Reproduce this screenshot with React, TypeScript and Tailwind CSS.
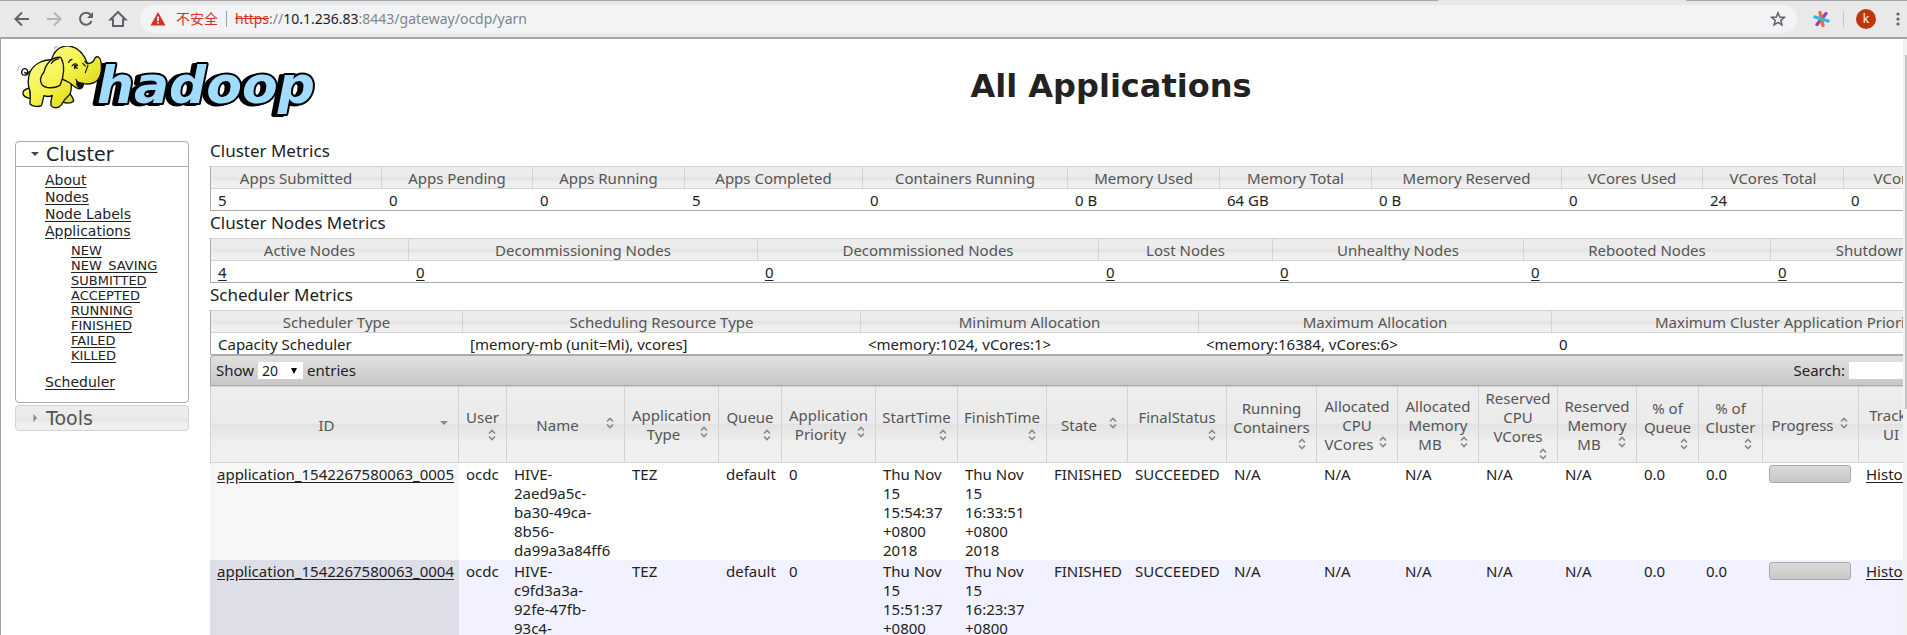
import React, { type ReactNode } from "react";

const metricTables: { title: string; links?: boolean; cols: [string, string, string][] }[] = [
  {
    title: "Cluster Metrics",
    cols: [
      ["Apps Submitted", "5", "w-[171px]"],
      ["Apps Pending", "0", "w-[151px]"],
      ["Apps Running", "0", "w-[152px]"],
      ["Apps Completed", "5", "w-[178px]"],
      ["Containers Running", "0", "w-[205px]"],
      ["Memory Used", "0 B", "w-[152px]"],
      ["Memory Total", "64 GB", "w-[152px]"],
      ["Memory Reserved", "0 B", "w-[190px]"],
      ["VCores Used", "0", "w-[141px]"],
      ["VCores Total", "24", "w-[141px]"],
      ["VCores Reserved", "0", "w-[178px]"],
    ],
  },
  {
    title: "Cluster Nodes Metrics",
    links: true,
    cols: [
      ["Active Nodes", "4", "w-[198px]"],
      ["Decommissioning Nodes", "0", "w-[349px]"],
      ["Decommissioned Nodes", "0", "w-[341px]"],
      ["Lost Nodes", "0", "w-[174px]"],
      ["Unhealthy Nodes", "0", "w-[251px]"],
      ["Rebooted Nodes", "0", "w-[247px]"],
      ["Shutdown Nodes", "0", "w-[251px]"],
    ],
  },
  {
    title: "Scheduler Metrics",
    cols: [
      ["Scheduler Type", "Capacity Scheduler", "w-[252px]"],
      ["Scheduling Resource Type", "[memory-mb (unit=Mi), vcores]", "w-[398px]"],
      ["Minimum Allocation", "<memory:1024, vCores:1>", "w-[338px]"],
      ["Maximum Allocation", "<memory:16384, vCores:6>", "w-[353px]"],
      ["Maximum Cluster Application Priority", "0", "w-[470px]"],
    ],
  },
];

type Sort = "inline" | "below" | "desc" | "none";
const appCols: { label: string[]; width: string; sort: Sort }[] = [
  { label: ["ID"], width: "w-[249px]", sort: "desc" },
  { label: ["User"], width: "w-[48px]", sort: "below" },
  { label: ["Name"], width: "w-[118px]", sort: "inline" },
  { label: ["Application", "Type"], width: "w-[94px]", sort: "inline" },
  { label: ["Queue"], width: "w-[63px]", sort: "below" },
  { label: ["Application", "Priority"], width: "w-[94px]", sort: "inline" },
  { label: ["StartTime"], width: "w-[82px]", sort: "below" },
  { label: ["FinishTime"], width: "w-[89px]", sort: "below" },
  { label: ["State"], width: "w-[81px]", sort: "inline" },
  { label: ["FinalStatus"], width: "w-[99px]", sort: "below" },
  { label: ["Running", "Containers"], width: "w-[90px]", sort: "below" },
  { label: ["Allocated", "CPU", "VCores"], width: "w-[81px]", sort: "inline" },
  { label: ["Allocated", "Memory", "MB"], width: "w-[81px]", sort: "inline" },
  { label: ["Reserved", "CPU", "VCores"], width: "w-[79px]", sort: "below" },
  { label: ["Reserved", "Memory", "MB"], width: "w-[79px]", sort: "inline" },
  { label: ["% of", "Queue"], width: "w-[62px]", sort: "below" },
  { label: ["% of", "Cluster"], width: "w-[64px]", sort: "below" },
  { label: ["Progress"], width: "w-[96px]", sort: "inline" },
  { label: ["Tracking", "UI"], width: "w-[81px]", sort: "inline" },
  { label: ["Blacklisted", "Nodes"], width: "w-[82px]", sort: "none" },
];

const apps = [
  {
    id: "application_1542267580063_0005",
    name: ["HIVE-", "2aed9a5c-", "ba30-49ca-", "8b56-", "da99a3a84ff6"],
    start: ["Thu Nov", "15", "15:54:37", "+0800", "2018"],
    finish: ["Thu Nov", "15", "16:33:51", "+0800", "2018"],
  },
  {
    id: "application_1542267580063_0004",
    name: ["HIVE-", "c9fd3a3a-", "92fe-47fb-", "93c4-"],
    start: ["Thu Nov", "15", "15:51:37", "+0800", "2018"],
    finish: ["Thu Nov", "15", "16:23:37", "+0800", "2018"],
  },
];

const states = ["NEW", "NEW_SAVING", "SUBMITTED", "ACCEPTED", "RUNNING", "FINISHED", "FAILED", "KILLED"];

const headFill =
  "bg-[linear-gradient(to_bottom,#ededed_0%,#ebebeb_48%,#e3e3e3_50%,#efefef_75%,#f0f0f0_100%)]";

function Lines({ items }: { items: string[] }) {
  return (
    <>
      {items.map((t, i) => (
        <span key={i} className="block whitespace-nowrap">
          {t}
        </span>
      ))}
    </>
  );
}

function SortArrows() {
  return (
    <svg width="8" height="12" viewBox="0 0 8 12" fill="none" stroke="#888" strokeWidth="1.6" aria-hidden="true">
      <path d="M1 4.5 4 1.5 7 4.5M1 7.5l3 3 3-3" />
    </svg>
  );
}

function BrowserBar() {
  return (
    <header className="bg-[#e9e9e9] border-b-2 border-[#a4a4a4]">
      <div className="flex h-px" aria-hidden="true">
        <div className="w-[1438px] bg-[#a6a6a6]" />
        <div className="w-[248px]" />
        <div className="flex-1 bg-[#a6a6a6]" />
      </div>
      <div className="flex h-9 items-center pl-3">
        <nav className="flex w-32 gap-3 text-[#5f6368]">
          <button aria-label="Back">
            <svg width="20" height="20" viewBox="0 0 20 20" fill="none" stroke="currentColor" strokeWidth="2">
              <path d="M17 10H4M10 3.5 3.5 10l6.5 6.5" />
            </svg>
          </button>
          <button aria-label="Forward" className="text-[#b4b4b4]">
            <svg width="20" height="20" viewBox="0 0 20 20" fill="none" stroke="currentColor" strokeWidth="2">
              <path d="M3 10h13M10 3.5 16.5 10 10 16.5" />
            </svg>
          </button>
          <button aria-label="Reload">
            <svg width="20" height="20" viewBox="0 0 20 20" fill="none" stroke="currentColor" strokeWidth="2">
              <path d="M15.6 12A6 6 0 1 1 14.5 5.7L16 7.5" />
              <path d="M17 3v6h-6z" fill="currentColor" stroke="none" />
            </svg>
          </button>
          <button aria-label="Home">
            <svg width="20" height="20" viewBox="0 0 20 20" fill="none" stroke="currentColor" strokeWidth="2">
              <path d="M2.5 10.5 10 3l7.5 7.5h-2.5V17H5v-6.5z" />
            </svg>
          </button>
        </nav>
        <div className="flex h-7 flex-1 items-center rounded-full bg-[#f1f3f4] pr-[11px] pl-[10px] font-['Noto_Sans','Noto_Sans_CJK_SC',sans-serif] text-sm">
          <svg width="16" height="16" viewBox="0 0 16 16" aria-hidden="true">
            <path d="M8 1 15.5 14.5H.5z" fill="#d93025" />
            <path d="M7.2 5.5h1.6v4.5H7.2zM7.2 11h1.6v1.6H7.2z" fill="#fff" />
          </svg>
          <span className="ml-[10px] text-[#d93025]">不安全</span>
          <span className="mx-2 h-4 w-px bg-[#9aa0a6]" />
          <span className="flex-1 text-[#80868b]">
            <span className="text-[#d93025] line-through">https</span>://
            <span className="text-[#202124]">10.1.236.83</span>:8443/gateway/ocdp/yarn
          </span>
          <button aria-label="Bookmark this page">
            <svg width="16" height="16" viewBox="0 0 16 16" fill="none" stroke="#5f6368" strokeWidth="1.5">
              <path d="m8 1.8 1.7 4.3 4.6.3-3.5 2.9 1.1 4.5L8 11.3l-3.9 2.5 1.1-4.5L1.7 6.4l4.6-.3z" />
            </svg>
          </button>
        </div>
        <div className="flex items-center pr-[7px] pl-4">
          <svg width="18" height="18" viewBox="0 0 18 18" fill="none" strokeLinecap="round" strokeWidth="3.4" role="img" aria-label="Extension">
            <path d="M13 3.5 4 14.5" stroke="#8e4ba5" />
            <path d="M7 2.5 10 15.5" stroke="#f26b3a" />
            <path d="M2 7 15 11" stroke="#35b4e8" />
          </svg>
          <span className="mx-3 h-4 w-px bg-[#c4c4c4]" />
          <button className="h-5 w-5 rounded-full bg-[#bf360c] font-['Noto_Sans',sans-serif] text-xs leading-5 text-white">
            k
          </button>
          <button aria-label="Menu" className="ml-5">
            <svg width="4" height="14" viewBox="0 0 4 14" fill="#5f6368">
              <circle cx="2" cy="2" r="1.6" />
              <circle cx="2" cy="7" r="1.6" />
              <circle cx="2" cy="12" r="1.6" />
            </svg>
          </button>
        </div>
      </div>
    </header>
  );
}

function Logo() {
  return (
    <svg width="304" height="76" viewBox="0 0 304 76" role="img" aria-label="hadoop">
      <defs>
        <linearGradient id="skin" gradientUnits="userSpaceOnUse" x1="60" y1="30" x2="190" y2="190">
          <stop offset="0" stopColor="#fdfb9a" />
          <stop offset="0.5" stopColor="#f6f34c" />
          <stop offset="1" stopColor="#dcd818" />
        </linearGradient>
      </defs>
      <g
        className="drop-shadow-[-4px_1px_0_#000]"
        fontFamily="'DejaVu Sans'"
        fontWeight="700"
        fontStyle="italic"
        fontSize="52"
        strokeLinejoin="round"
      >
        <text x="82" y="57" fill="#a0dcff" stroke="#000" strokeWidth="4" paintOrder="stroke">hadoop</text>
      </g>
      <g transform="translate(-1 -4) scale(0.3333)" stroke="#111" strokeWidth="4" strokeLinejoin="round" strokeLinecap="round">
        <path d="M47 88C38 104 22 102 23 90 24 78 40 76 41 88c0 6-7 8-9 3" fill="none" />
        <g fill="url(#skin)">
          <path d="M160 142c4 12 18 20 19 36-8 6-22 6-34 2z" />
          <path d="M46 138c-14 4-21 11-19 18 2 9 13 12 24 14z" />
          <path d="M118 54C88 50 60 66 48 90c-8 22-6 42 0 58 2 8 0 24 0 38 8 9 26 9 34 5 4-10 5-20 8-30 8 3 18 3 25-1-4 12-5 22-4 31 8 9 22 8 30-1 6-11 14-22 24-30 8-9 8-26 6-42z" />
          <path d="M112 58c4-30 26-48 54-46 26 4 44 24 54 52 12 2 20-8 23-16 8-8 16-2 18 12 3 22 0 42-10 54-10 10-26 14-44 11 2 10-4 17-14 15-14-4-22-18-34-22-26-10-42-28-47-60z" />
          <path d="M140 46c-26-2-44 18-50 44-10 12-14 26-6 38 12 12 36 12 54 2 12-24 16-62 2-84z" />
        </g>
        <g fill="none" strokeWidth="3.5">
          <path d="M134 50c-10 2-18 8-22 15M164 62c1-6 5-9 10-10M174 72c6-8 14-8 17-1M181 79c4-3 6-3 9 0M212 58l9 8M206 64l8 8M222 70l-8 22M186 112c2 8 11 12 22 12" />
          <path d="M189 118c5 5 12 7 18 6 1 10-5 15-13 12-5-3-7-10-5-18z" fill="#111" />
          <circle cx="184" cy="73" r="3" fill="#111" />
          <path d="M122 22v-7h8M12 84v-6l5-5" stroke="#777" strokeWidth="2" />
        </g>
      </g>
    </svg>
  );
}

function NavLink({ children }: { children: ReactNode }) {
  return (
    <a href="#" className="underline underline-offset-2">
      {children}
    </a>
  );
}

function Sidebar() {
  return (
    <nav className="w-[174px] shrink-0 font-['DejaVu_Sans',sans-serif] text-[#222]">
      <section className="rounded border border-[#aaa]">
        <h3 className="flex h-[25px] items-center border-b border-[#aaa] pl-[14px] text-[19px] leading-6">
          <svg width="10" height="6" viewBox="0 0 10 6" aria-hidden="true">
            <path d="M1 1h8L5 5z" fill="#454545" />
          </svg>
          <span className="ml-[6px]">Cluster</span>
        </h3>
        <ul className="pt-[5px] pb-[11px] pl-[29px] text-sm leading-[17px]">
          <li><NavLink>About</NavLink></li>
          <li><NavLink>Nodes</NavLink></li>
          <li><NavLink>Node Labels</NavLink></li>
          <li>
            <NavLink>Applications</NavLink>
            <ul className="pt-[3px] pb-[11px] pl-[26px] text-[13px] leading-[15px]">
              {states.map((s) => (
                <li key={s}><NavLink>{s}</NavLink></li>
              ))}
            </ul>
          </li>
          <li><NavLink>Scheduler</NavLink></li>
        </ul>
      </section>
      <h3 className={`mt-[2px] flex h-[26px] items-center rounded border border-[#d3d3d3] pl-[14px] text-[19px] leading-6 text-[#555] ${headFill}`}>
        <svg width="10" height="10" viewBox="0 0 10 10" aria-hidden="true">
          <path d="M3.5 1v8L7 5z" fill="#888" />
        </svg>
        <span className="ml-[6px]">Tools</span>
      </h3>
    </nav>
  );
}

function MetricTable({ title, links, cols }: (typeof metricTables)[number]) {
  return (
    <section>
      <h2 className="h-[27px] text-[17px] leading-6">{title}</h2>
      <table className="w-[1812px] table-fixed border-separate border-spacing-0 border-b border-l border-[#aaa] text-[15px] leading-5">
        <thead>
          <tr>
            {cols.map(([label, , w]) => (
              <th
                key={label}
                className={`h-[23px] border-y border-r border-[#d3d3d3] p-0 pt-px font-normal text-[#555] ${w} ${headFill}`}
              >
                {label}
              </th>
            ))}
          </tr>
        </thead>
        <tbody>
          <tr>
            {cols.map(([label, value]) => (
              <td key={label} className="h-[21px] pt-px pr-0 pb-0 pl-[7px]">
                {links ? <NavLink>{value}</NavLink> : value}
              </td>
            ))}
          </tr>
        </tbody>
      </table>
    </section>
  );
}

function Heading({ label, sort }: { label: string[]; sort: Sort }) {
  if (sort === "below")
    return (
      <div className="flex flex-col items-center">
        <Lines items={label} />
        <span className="flex h-[15px] w-full items-center justify-end pr-[10px]">
          <SortArrows />
        </span>
      </div>
    );
  return (
    <div className="relative">
      {label.slice(0, -1).map((t) => (
        <span key={t} className="block">{t}</span>
      ))}
      <span className={`block ${sort === "none" ? "" : "pr-4"}`}>{label[label.length - 1]}</span>
      {sort !== "none" && (
        <span className="absolute right-[10px] bottom-[6px]">
          {sort === "desc" ? (
            <svg width="8" height="12" viewBox="0 0 8 12" aria-hidden="true">
              <path d="M0 4h8L4 8z" fill="#888" />
            </svg>
          ) : (
            <SortArrows />
          )}
        </span>
      )}
    </div>
  );
}

function Applications() {
  return (
    <section className="w-[1812px]">
      <div className="flex h-[31px] items-center rounded-t border-t border-b border-l border-[#aaa] bg-linear-to-b from-[#e0e0e0] to-[#c8c8c8] pl-[5px] text-[15px]">
        <label className="flex items-center gap-1">
          Show
          <span className="relative flex items-center">
            <select className="h-[17px] w-[45px] appearance-none bg-white pl-1 text-sm leading-4" defaultValue="20">
              <option>20</option>
              <option>50</option>
            </select>
            <svg className="pointer-events-none absolute right-[5px]" width="8" height="6" viewBox="0 0 8 6" aria-hidden="true">
              <path d="M1 0h6L4 6z" fill="#000" />
            </svg>
          </span>
          entries
        </label>
        <label className="ml-auto flex items-center gap-1 pr-[6px]">
          Search:
          <input type="text" className="h-[17px] w-[167px] bg-white" />
        </label>
      </div>
      <table className="w-[1812px] table-fixed border-separate border-spacing-0 text-[15px] leading-[19px]">
        <thead>
          <tr>
            {appCols.map((c, i) => (
              <th
                key={i}
                className={`h-[77px] border-y border-r border-[#d3d3d3] p-0 pt-px align-middle font-normal text-[#555] first:border-l ${c.width} ${headFill}`}
              >
                <Heading label={c.label} sort={c.sort} />
              </th>
            ))}
          </tr>
        </thead>
        <tbody>
          {apps.map((a, r) => {
            const cells: ReactNode[] = [
              <NavLink>{a.id}</NavLink>,
              "ocdc",
              <Lines items={a.name} />,
              "TEZ",
              "default",
              "0",
              <Lines items={a.start} />,
              <Lines items={a.finish} />,
              "FINISHED",
              "SUCCEEDED",
              "N/A",
              "N/A",
              "N/A",
              "N/A",
              "N/A",
              "0.0",
              "0.0",
              <div className="-ml-px h-[18px] w-[82px] rounded-[3px] border border-[#aaa] bg-linear-to-b from-[#dadada] to-[#c8c8c8]" />,
              <NavLink>History</NavLink>,
              "N/A",
            ];
            return (
              <tr key={a.id} className={r % 2 ? "bg-[#f1f1ff]" : "bg-white"}>
                {cells.map((c, i) => (
                  <td
                    key={i}
                    className={`h-[97px] pt-[2px] pr-0 pb-0 pl-[7px] align-top whitespace-nowrap ${
                      i === 0 ? (r % 2 ? "bg-[#dedee9]" : "bg-[#f7f7f7]") : ""
                    }`}
                  >
                    {c}
                  </td>
                ))}
              </tr>
            );
          })}
        </tbody>
      </table>
    </section>
  );
}

export default function App() {
  return (
    <div className="flex h-screen flex-col overflow-hidden bg-white text-[#222]">
      <BrowserBar />
      <div className="flex min-h-0 flex-1 border-l border-[#a4a4a4]">
        <div className="min-w-0 flex-1 overflow-hidden">
          <div className="flex h-[100px] items-start pt-[7px] pl-[14px]">
            <Logo />
            <h1 className="mt-5 flex-1 text-center font-['DejaVu_Sans',sans-serif] text-[32px] leading-10 font-bold">
              All Applications
            </h1>
          </div>
          <div className="flex pl-[14px]">
            <div className="pt-[2px]">
              <Sidebar />
            </div>
            <main className="ml-[21px] shrink-0 font-['Noto_Sans',sans-serif]">
              {metricTables.map((t) => (
                <MetricTable key={t.title} {...t} />
              ))}
              <Applications />
            </main>
          </div>
        </div>
        <div className="flex w-1 flex-col bg-[#f1f1f1] pt-4 pl-[2px]" aria-hidden="true">
          <div className="h-[61%] bg-[#c1c1c1]" />
        </div>
      </div>
    </div>
  );
}
